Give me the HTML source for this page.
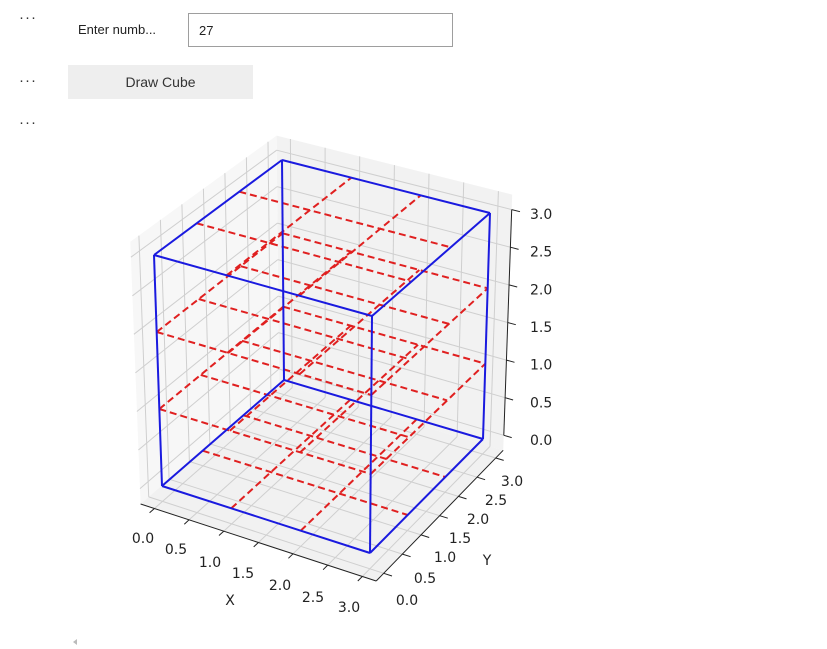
<!DOCTYPE html>
<html><head><meta charset="utf-8"><style>
body{margin:0;width:827px;height:649px;background:#fff;font-family:"Liberation Sans",sans-serif;overflow:hidden;position:relative}
.d{position:absolute;left:19px;font-size:15px;color:#333;letter-spacing:1px}
</style></head><body>
<div class="d" style="top:9px">···</div>
<div class="d" style="top:72px">···</div>
<div class="d" style="top:114px">···</div>
<div style="position:absolute;left:78px;top:22px;font-size:13px;color:#222">Enter numb...</div>
<div style="position:absolute;left:188px;top:13px;width:265px;height:34px;border:1px solid #9e9e9e;box-sizing:border-box;font-size:13px;color:#222;padding:9px 0 0 10px">27</div>
<div style="position:absolute;left:68px;top:65px;width:185px;height:34px;background:#eee;font-size:14px;color:#333;text-align:center;line-height:34px">Draw Cube</div>
<div style="position:absolute;left:73px;top:639px;width:0;height:0;border-top:3px solid transparent;border-bottom:3px solid transparent;border-right:4px solid #bbb"></div>
<svg id="s" width="827" height="649" style="position:absolute;left:0;top:0"></svg>
<script>
var C={"000":[162,486],"300":[370,553],"030":[284,380],"330":[483,439],"003":[154,255],"303":[372,316],"033":[282,160],"333":[490,213]};
function P(x,y,z){var u=x/3,v=y/3,w=z/3,r=[0,0];
for(var a=0;a<2;a++)for(var b=0;b<2;b++)for(var c=0;c<2;c++){var k=(a?"3":"0")+(b?"3":"0")+(c?"3":"0");var f=(a?u:1-u)*(b?v:1-v)*(c?w:1-w);r[0]+=f*C[k][0];r[1]+=f*C[k][1];}return r;}
var h="",m=-0.2,M=3.2;
function L(p,q,st){h+='<line x1="'+p[0].toFixed(1)+'" y1="'+p[1].toFixed(1)+'" x2="'+q[0].toFixed(1)+'" y2="'+q[1].toFixed(1)+'" '+st+'/>';}
function poly(pts,f){h+='<polygon points="'+pts.map(function(p){return p[0].toFixed(1)+','+p[1].toFixed(1)}).join(' ')+'" fill="'+f+'"/>';}
poly([P(m,M,m),P(M,M,m),P(M,M,M),P(m,M,M)],"#f2f2f2");
poly([P(m,m,m),P(m,M,m),P(m,M,M),P(m,m,M)],"#f7f7f7");
poly([P(m,m,m),P(M,m,m),P(M,M,m),P(m,M,m)],"#f1f1f1");
var g='stroke="#cfcfcf" stroke-width="1"';
for(var t=0;t<=3.001;t+=0.5){
L(P(t,M,m),P(t,M,M),g);L(P(m,M,t),P(M,M,t),g);
L(P(m,t,m),P(m,t,M),g);L(P(m,m,t),P(m,M,t),g);
L(P(t,m,m),P(t,M,m),g);L(P(m,t,m),P(M,t,m),g);}
var k='stroke="#222" stroke-width="1"';
L(P(m,m,m),P(M,m,m),k);L(P(M,m,m),P(M,M,m),k);L(P(M,M,0),P(M,M,3),k);
for(var t=0;t<=3.001;t+=0.5){var a=P(t,m,m),b=P(t,m-0.12,m);L(a,b,k);
a=P(M,t,m);b=P(M+0.12,t,m);L(a,b,k);a=P(M,M,t);b=P(M+0.12,M,t);L(a,b,k);}
var r='stroke="#e02020" stroke-width="2" stroke-dasharray="7,4"';
for(var i=0;i<4;i++)for(var j=0;j<4;j++){if((i==0||i==3)&&(j==0||j==3))continue;
L(P(0,i,j),P(3,i,j),r);L(P(i,0,j),P(i,3,j),r);}
var bl='stroke="#1a1adf" stroke-width="2"';
[[0,0],[0,3],[3,0],[3,3]].forEach(function(q){L(P(0,q[0],q[1]),P(3,q[0],q[1]),bl);L(P(q[0],0,q[1]),P(q[0],3,q[1]),bl);L(P(q[0],q[1],0),P(q[0],q[1],3),bl);});
var tx='font-family="DejaVu Sans,Liberation Sans,sans-serif" font-size="14" fill="#222"';
var lab=["0.0","0.5","1.0","1.5","2.0","2.5","3.0"];
var xl=[[143,538],[176,549],[210,562],[243,573],[280,585],[313,597],[349,607]];
var yl=[[407,600],[425,578],[445,557],[460,538],[478,519],[496,500],[512,481]];
for(var i=0;i<7;i++){h+='<text x="'+xl[i][0]+'" y="'+(xl[i][1]+5)+'" text-anchor="middle" '+tx+'>'+lab[i]+'</text>';
h+='<text x="'+yl[i][0]+'" y="'+(yl[i][1]+5)+'" text-anchor="middle" '+tx+'>'+lab[i]+'</text>';
var zy=440-i*(440-214)/6;h+='<text x="530" y="'+(zy+5)+'" '+tx+'>'+lab[i]+'</text>';}
h+='<text x="230" y="605" text-anchor="middle" '+tx+'>X</text><text x="487" y="565" text-anchor="middle" '+tx+'>Y</text>';
document.getElementById("s").innerHTML=h;
</script>
</body></html>
